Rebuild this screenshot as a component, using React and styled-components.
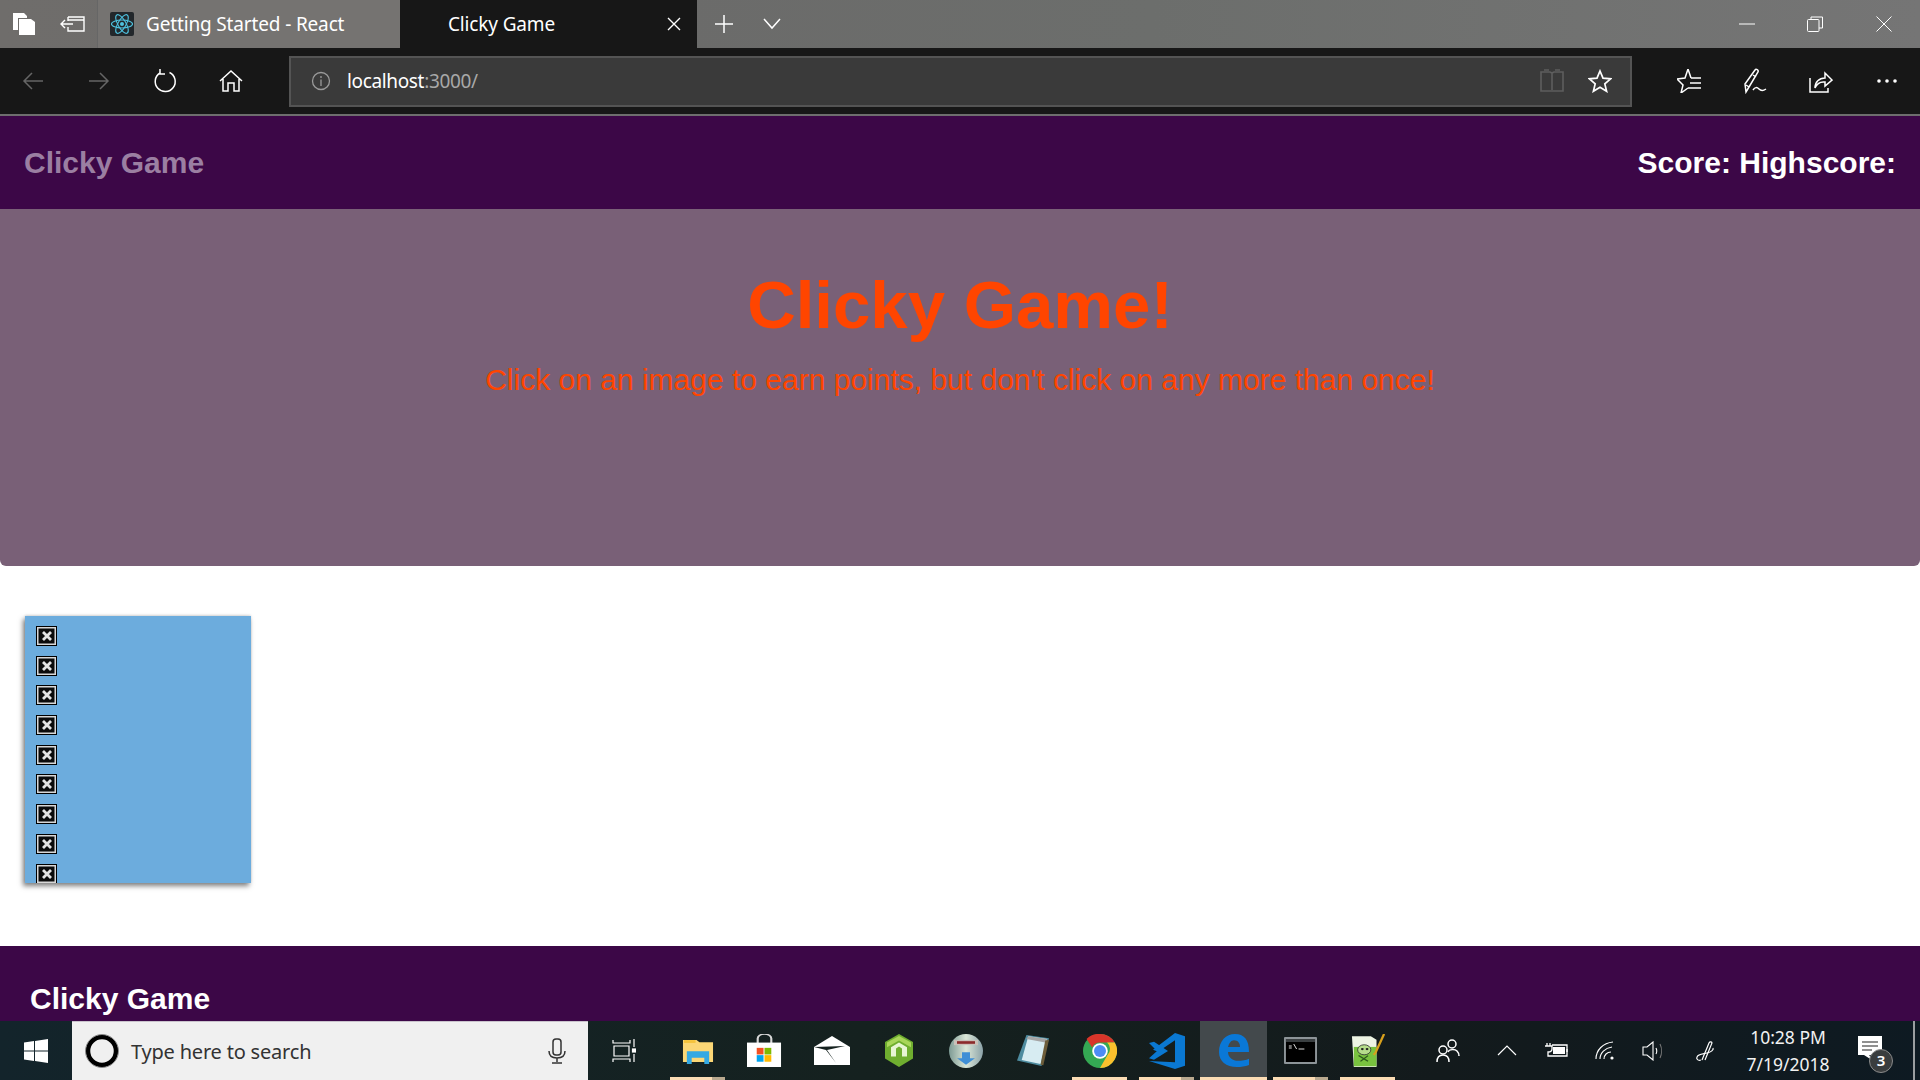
import React from "react";
import styled, { createGlobalStyle } from "styled-components";

const Global = createGlobalStyle`
  html, body { margin: 0; padding: 0; height: 100%; overflow: hidden; background: #fff; }
  #root { height: 1080px; }
  * { box-sizing: border-box; }
`;

const Screen = styled.div`
  display: flex; flex-direction: column; width: 1920px; height: 1080px; overflow: hidden;
  font-family: "Liberation Sans", Arial, sans-serif;
`;

/* ---------- browser chrome ---------- */
const TabBar = styled.div`
  display: flex; height: 48px; flex: none; color: #fff;
  background: linear-gradient(90deg, #6f6d6b 0%, #6b6b6a 35%, #6c6e6c 60%, #757575 100%);
  font-family: "Noto Sans", sans-serif; font-size: 19px;
`;
const TabTools = styled.div`
  display: flex; width: 97px; align-items: center; justify-content: space-between; padding: 0 12px 0 13px;
`;
const Tab = styled.div`
  display: flex; align-items: center; height: 48px; width: ${p => p.$w}px;
  padding-left: ${p => p.$pad}px; gap: 12px; position: relative;
  background: ${p => (p.$active ? "#171717" : "#757371")};
  border-left: ${p => (p.$active ? "none" : "1px solid #666")};
  letter-spacing: -0.15px; flex: none; white-space: nowrap;
`;
const TabClose = styled.span`
  display: flex; margin-left: auto; margin-right: 15px;
`;
const TabAction = styled.div`
  display: flex; width: ${p => p.$w}px; align-items: center; justify-content: center; flex: none;
`;
const WindowControls = styled.div`
  display: flex; margin-left: auto; height: 48px; padding-right: 2px;
`;
const WindowButton = styled.div`
  display: flex; width: 68.5px; align-items: center; justify-content: center;
`;
const NavBar = styled.div`
  display: flex; align-items: center; height: 66px; flex: none; background: #171717;
`;
const NavButton = styled.div`
  display: flex; width: 66px; height: 66px; align-items: center; justify-content: center; flex: none;
`;
const AddressBar = styled.div`
  display: flex; align-items: center; width: 1343px; height: 51px; margin-left: 25px; margin-right: 24px;
  background: #3a3a3a; border: 2px solid #545454; flex: none; padding-left: 20px;
  font-family: "Noto Sans", sans-serif; font-size: 19px; color: #fff; letter-spacing: -0.35px;
`;
const AddressText = styled.span`
  margin-left: 16px;
  em { font-style: normal; color: #a8a8a8; }
`;
const AddressIcons = styled.div`
  display: flex; margin-left: auto; align-items: center; gap: 23px; padding-right: 18px;
`;
const ChromeLine = styled.div` height: 2px; flex: none; background: #6e6e6e; `;

/* ---------- page ---------- */
const Viewport = styled.div` flex: 1; min-height: 0; overflow: hidden; display: flex; flex-direction: column; `;
const TopNav = styled.nav`
  display: flex; align-items: center; justify-content: space-between; height: 93px; flex: none;
  background: #3c0747; padding: 0 24px; font-weight: 700; font-size: 30px;
`;
const Brand = styled.span` color: #9b7fa2; `;
const Score = styled.span` color: #fff; `;
const Hero = styled.header`
  height: 357px; flex: none; background: #796077; border-radius: 0 0 6px 6px; color: #ff4500;
  text-align: center; padding-top: 58px;
`;
const HeroTitle = styled.h1` margin: 0; font-size: 67.2px; line-height: 76px; font-weight: 700; `;
const HeroText = styled.p` margin: 18px 0 0; font-size: 30px; line-height: 38px; `;
const Board = styled.main` flex: none; height: 380px; padding: 50px 25px 0; `;
const Card = styled.div`
  display: flex; flex-direction: column; gap: 9.7px; width: 226px; height: 267px; overflow: hidden;
  padding: 10px 11px; background: #6cacdd;
  box-shadow: -2px 3px 5px rgba(0, 0, 0, 0.5), 0 -1px 2px rgba(0, 0, 0, 0.12);
`;
const BrokenImage = styled.div`
  display: flex; align-items: center; justify-content: center; width: 21px; height: 20px; flex: none;
  background: #0c0c0c; border: 1px solid #000; box-shadow: inset 0 0 0 1.5px #d8d8d8;
`;
const Footer = styled.footer`
  height: 75px; flex: none; background: #3c0747; color: #fff; padding: 36px 30px 0;
  font-size: 30px; line-height: 34px; font-weight: 700;
`;

/* ---------- taskbar ---------- */
const Taskbar = styled.div`
  display: flex; height: 59px; flex: none; align-items: stretch; color: #fff;
  background: linear-gradient(90deg, #13242b 0%, #15211f 45%, #131a1c 75%, #0e1a22 100%);
  font-family: "Noto Sans", sans-serif;
`;
const StartButton = styled.div` display: flex; width: 72px; align-items: center; justify-content: center; `;
const SearchBox = styled.div`
  display: flex; align-items: center; width: 516px; padding: 0 22px 0 13px; background: #f0f0f0;
  border-top: 1px solid #c9c3cc; color: #333; font-size: 20px; letter-spacing: -0.2px;
`;
const SearchText = styled.span` margin-left: 12px; `;
const SearchMic = styled.span` display: flex; margin-left: auto; `;
const TaskView = styled.div` display: flex; width: 76px; padding-right: 4px; align-items: center; justify-content: center; `;
const AppSlot = styled.div`
  display: flex; position: relative; width: 67px; align-items: center; justify-content: center;
  background: ${p => (p.$focus ? "#43494c" : "transparent")};
`;
const RunningMark = styled.span`
  position: absolute; left: ${p => (p.$focus ? 0 : 6)}px; right: ${p => (p.$focus ? 0 : 6)}px; bottom: 0; height: 3px;
  background: ${p => (p.$split
    ? "linear-gradient(90deg, #fbdcb4 0 77%, #b9a98f 77% 100%)"
    : "#fbdcb4")};
`;
const Tray = styled.div` display: flex; margin-left: auto; `;
const TraySlot = styled.div` display: flex; width: ${p => p.$w}px; align-items: center; justify-content: center; `;
const Clock = styled.div`
  display: flex; flex-direction: column; width: 110px; align-items: center; justify-content: center; gap: 5px;
  font-size: 17.5px; line-height: 22px; color: #f2f2f2;
`;
const Notify = styled.div`
  display: flex; position: relative; width: 70px; align-items: center; justify-content: center;
`;
const Badge = styled.span`
  position: absolute; left: 26px; top: 28px; width: 24px; height: 24px; border-radius: 50%;
  background: #3a3d3e; border: 1px solid #8a8a8a; color: #fff; font-size: 15px; line-height: 21px; font-weight: 600; text-align: center;
`;
const ShowDesktop = styled.div` width: 7px; border-left: 2px solid #9a9ea0; `;

/* ---------- drawings ---------- */
const Ico = ({ w = 24, h = 24, vb, sw = 1.5, stroke = "#fff", fill = "none", children }) => (
  <svg width={w} height={h} viewBox={vb || `0 0 ${w} ${h}`} fill={fill} stroke={stroke} strokeWidth={sw}>{children}</svg>
);

const ReactLogo = () => (
  <svg width="24" height="24" viewBox="0 0 24 24">
    <rect width="24" height="24" rx="2" fill="#22272b" />
    <g fill="none" stroke="#4fc3e0" strokeWidth="1.100">
      <ellipse cx="12" cy="12" rx="10.500" ry="4" />
      <ellipse cx="12" cy="12" rx="10.500" ry="4" transform="rotate(60 12 12)" />
      <ellipse cx="12" cy="12" rx="10.500" ry="4" transform="rotate(120 12 12)" />
    </g>
    <circle cx="12" cy="12" r="2" fill="#4fc3e0" />
  </svg>
);

const Star = ({ size = 24, color = "#fff" }) => (
  <Ico w={size} h={size} vb="0 0 24 24" stroke={color} sw="1.700">
    <path d="M12 2l3 7.200 7.600.6-5.800 5 1.800 7.500L12 18.300l-6.600 4 1.800-7.500-5.800-5 7.600-.6z" />
  </Ico>
);

const Slash = () => (
  <svg width="12" height="12" viewBox="0 0 12 12" fill="none" stroke="#e4e4e4" strokeWidth="2.800">
    <path d="M2 2l8 8M10 2l-8 8" />
  </svg>
);

const Explorer = () => (
  <svg width="32" height="26" viewBox="0 0 33 37" preserveAspectRatio="none">
    <path d="M1 3h14l3 3h14v28H1z" fill="#fbd776" />
    <rect x="2" y="3" width="12" height="4" fill="#f5c33b" />
    <path d="M5 37V19h23v18h-5v-9H10v9z" fill="#34a9e3" />
  </svg>
);
const Store = () => (
  <svg width="35" height="33" viewBox="0 0 36 50" preserveAspectRatio="none">
    <path d="M11 14V7a7 7 0 0 1 14 0v7" fill="none" stroke="#d8d8d8" strokeWidth="2.200" />
    <rect y="13" width="35" height="37" fill="#fff" />
    <rect x="10" y="21" width="7" height="10" fill="#f25022" />
    <rect x="18" y="21" width="7" height="10" fill="#7fba00" />
    <rect x="10" y="32" width="7" height="10" fill="#00a4ef" />
    <rect x="18" y="32" width="7" height="10" fill="#ffb900" />
  </svg>
);
const Mail = () => (
  <svg width="36" height="29" viewBox="0 0 36 29">
    <path d="M0 11L18 0l18 11v18H0z" fill="#fff" />
    <path d="M0 11l31-1-18 4 9 13-10-13z" fill="#15211f" />
  </svg>
);
const GreenApp = () => (
  <svg width="28" height="33" viewBox="0 0 28 50" preserveAspectRatio="none">
    <path d="M14 0l14 12v25L14 50 0 37V12z" fill="#6fae2f" />
    <path d="M14 3l12 10v7L14 10 2 20v-7z" fill="#a9d65a" />
    <path d="M6 34V20l8-7 8 7v14h-5V22l-3-3-3 3v12z" fill="#e8f5d4" />
  </svg>
);
const Installer = () => (
  <svg width="34" height="34" viewBox="0 0 34 52" preserveAspectRatio="none">
    <defs>
      <linearGradient id="nsisG" x1="0" x2="1">
        <stop offset="0" stopColor="#7d9a94" /><stop offset="0.5" stopColor="#dbe7d8" /><stop offset="1" stopColor="#8ba2a8" />
      </linearGradient>
    </defs>
    <ellipse cx="17" cy="26" rx="17" ry="26" fill="url(#nsisG)" />
    <rect x="5" y="9" width="24" height="8" fill="#c9c0b8" />
    <rect x="8" y="11" width="18" height="4" fill="#8c2b2b" />
    <path d="M13 28h8v9h5l-9 10-9-10h5z" fill="#3f8fd6" />
  </svg>
);
const Notepad = () => (
  <svg width="32" height="31" viewBox="0 0 34 46" preserveAspectRatio="none">
    <path d="M10 0l24 5-8 41-26-8z" fill="#4e8ca0" />
    <path d="M12 2l20 4-7 37-20-6z" fill="#d7ecf2" />
    <path d="M12 2l20 4-2 5-20-5z" fill="#a5a5a5" />
    <path d="M30 8l4-1-6 38-3-1z" fill="#6d5d3a" />
  </svg>
);
const ChromeLogo = () => (
  <svg width="34" height="34" viewBox="0 0 48 48">
    <circle cx="24" cy="24" r="24" fill="#34a853" />
    <path d="M24 0a24 24 0 0 1 20.800 12H24a12 12 0 0 0-11 7L5 7A24 24 0 0 1 24 0z" fill="#d9352a" />
    <path d="M44.800 12A24 24 0 0 1 24 48l11-19a12 12 0 0 0-1-17z" fill="#fbc02d" />
    <circle cx="24" cy="24" r="11" fill="#fff" />
    <circle cx="24" cy="24" r="8.500" fill="#4e8cf5" />
  </svg>
);
const VSCode = () => (
  <svg width="36" height="36" viewBox="0 0 36 54" preserveAspectRatio="none">
    <path d="M26 0l10 5v44l-10 5L0 42l26 2V11L9 28l-5-3z" fill="#0a78d2" />
    <path d="M0 15l5-2 14 14-14 13-5-2 8-11z" fill="#0a78d2" />
  </svg>
);
const EdgeLogo = () => (
  <svg width="30" height="33" viewBox="0 0 30 48" preserveAspectRatio="none">
    <path d="M0 26C0 10 7 0 16 0c9 0 14 8 14 26H9c0 8 5 13 10 13 4 0 8-1 11-3v9c-4 2-8 3-12 3C7 48 0 39 0 26zM9 19h12c0-6-2-10-6-10-3 0-5 4-6 10z" fill="#0a78d7" />
  </svg>
);
const Terminal = () => (
  <svg width="33" height="27" viewBox="0 0 34 27" preserveAspectRatio="none">
    <rect width="34" height="27" rx="1" fill="#8d9498" />
    <rect x="2" y="2" width="30" height="23" fill="#000" />
    <rect x="2" y="2" width="30" height="3" fill="#3a3f41" />
    <path d="M5 9h3M5 11h3M10 7l3 5M15 12h6" stroke="#e0e0e0" strokeWidth="1" />
  </svg>
);
const NotepadPP = () => (
  <svg width="34" height="33" viewBox="0 0 36 46" preserveAspectRatio="none">
    <path d="M1 3h20l6 5v38H3z" fill="#eef4e4" />
    <rect x="3" y="18" width="24" height="27" fill="#79c23f" />
    <circle cx="14" cy="22" r="7" fill="#b6dd8c" stroke="#333" strokeWidth="1" />
    <circle cx="12" cy="21" r="1.500" fill="#222" /><circle cx="17" cy="21" r="1.500" fill="#222" />
    <path d="M8 30l10 8M18 30l-8 8" stroke="#2d5a1c" strokeWidth="1.500" />
    <path d="M35 0L26 26l-2 3 1-1" fill="none" stroke="#d8a01c" strokeWidth="2.500" />
  </svg>
);

const apps = [
  { key: "explorer", node: <Explorer />, run: true, split: true },
  { key: "store", node: <Store /> },
  { key: "mail", node: <Mail /> },
  { key: "green", node: <GreenApp /> },
  { key: "nsis", node: <Installer /> },
  { key: "notepad", node: <Notepad /> },
  { key: "chrome", node: <ChromeLogo />, run: true },
  { key: "vscode", node: <VSCode />, run: true, split: true },
  { key: "edge", node: <EdgeLogo />, run: true, focus: true },
  { key: "cmd", node: <Terminal />, run: true, split: true },
  { key: "npp", node: <NotepadPP />, run: true },
];

export default function App() {
  return (
    <Screen>
      <Global />
      <TabBar>
        <TabTools>
          <Ico w={22} h={22} sw="0" fill="#fff">
            <path d="M0 0h11l3 3v2H5v12H0z" /><path d="M6 6h12l4 3v13H6z" />
          </Ico>
          <Ico w={25} h={16} sw="1.400">
            <path d="M8 1h16v14H8v-4M8 5V1M8 4h16M1 8h12M5 4L1 8l4 4" />
          </Ico>
        </TabTools>
        <Tab $w={303} $pad={12}>
          <ReactLogo />
          <span>Getting Started - React</span>
        </Tab>
        <Tab $active $w={297} $pad={48}>
          <span>Clicky Game</span>
          <TabClose>
            <Ico w={16} h={16} sw="1.400"><path d="M2 2l12 12M14 2L2 14" /></Ico>
          </TabClose>
        </Tab>
        <TabAction $w={53}>
          <Ico w={22} h={22} sw="1.500"><path d="M11 2v18M2 11h18" /></Ico>
        </TabAction>
        <TabAction $w={44}>
          <Ico w={22} h={14} sw="1.500"><path d="M3 2l8 9 8-9" /></Ico>
        </TabAction>
        <WindowControls>
          <WindowButton><Ico w={16} h={16} sw="1"><path d="M0 8h16" /></Ico></WindowButton>
          <WindowButton>
            <Ico w={16} h={16} sw="1"><rect x=".5" y="3.500" width="11.500" height="12" rx="1" /><path d="M4 3V1h11.500v11H12" /></Ico>
          </WindowButton>
          <WindowButton><Ico w={16} h={16} sw="1"><path d="M.5.500l15 15M15.500.500l-15 15" /></Ico></WindowButton>
        </WindowControls>
      </TabBar>

      <NavBar>
        <NavButton>
          <Ico w={24} h={24} stroke="#666" sw="1.500"><path d="M22 12H3M11 4l-8 8 8 8" /></Ico>
        </NavButton>
        <NavButton>
          <Ico w={24} h={24} stroke="#666" sw="1.500"><path d="M2 12h19M13 4l8 8-8 8" /></Ico>
        </NavButton>
        <NavButton>
          <Ico w={24} h={24} sw="1.500"><path d="M7 4a10 10 0 1 0 9.500-.5" /><path d="M7 0v5h5" /></Ico>
        </NavButton>
        <NavButton>
          <Ico w={24} h={24} sw="1.500"><path d="M1 12L12 2l11 10M4 10v12h5v-8h6v8h5V10" /></Ico>
        </NavButton>
        <AddressBar>
          <Ico w={20} h={20} stroke="#9a9a9a" sw="1.300">
            <circle cx="10" cy="10" r="8.500" /><path d="M10 8.500V15M10 5v2" />
          </Ico>
          <AddressText>localhost<em>:3000/</em></AddressText>
          <AddressIcons>
            <Ico w={26} h={24} stroke="#5e5e5e" sw="1.600">
              <path d="M2 3h9l2 1 2-1h9v19H2zM13 4v17M5 1h5M16 1h5" />
            </Ico>
            <Star size={24} />
          </AddressIcons>
        </AddressBar>
        <NavButton>
          <Ico w={24} h={24} sw="1.500">
            <path d="M11 0l3 9M11 0L8 9l-8 1 6 6-2 8 7-5M14 9h10M13 14h11M11 19h13" />
          </Ico>
        </NavButton>
        <NavButton>
          <Ico w={24} h={26} sw="1.500">
            <path d="M3 24L2 16 12 2c1-1.500 4 0 3 2L6 19zM6 19l-3-2M10 7l3 2" /><path d="M10 22c2-3 4-3 6-1s4 2 7 0" />
          </Ico>
        </NavButton>
        <NavButton>
          <Ico w={24} h={24} sw="1.500">
            <path d="M1 9v14h18v-4" /><path d="M6 19c0-6 4-10 10-10V4l7 7-7 6v-4c-4-.5-8 1-10 6z" />
          </Ico>
        </NavButton>
        <NavButton>
          <Ico w={24} h={6} sw="0" fill="#fff">
            <circle cx="4" cy="3" r="1.800" /><circle cx="12" cy="3" r="1.800" /><circle cx="20" cy="3" r="1.800" />
          </Ico>
        </NavButton>
      </NavBar>
      <ChromeLine />

      <Viewport>
        <TopNav>
          <Brand>Clicky Game</Brand>
          <Score>Score: Highscore:</Score>
        </TopNav>
        <Hero>
          <HeroTitle>Clicky Game!</HeroTitle>
          <HeroText>Click on an image to earn points, but don't click on any more than once!</HeroText>
        </Hero>
        <Board>
          <Card>
            {Array.from({ length: 9 }, (_, i) => (
              <BrokenImage key={i}><Slash /></BrokenImage>
            ))}
          </Card>
        </Board>
        <Footer>Clicky Game</Footer>
      </Viewport>

      <Taskbar>
        <StartButton>
          <svg width="24" height="24" viewBox="0 0 24 24" fill="#fff">
            <path d="M0 3.500l10-1.400V11.500H0zM11 2l13-2v11.500H11zM0 12.500h10v9.400L0 20.500zM11 12.500h13V24l-13-2z" />
          </svg>
        </StartButton>
        <SearchBox>
          <svg width="34" height="34" viewBox="0 0 34 34" fill="none">
            <circle cx="17" cy="17" r="14" stroke="#000" strokeWidth="4.500" />
            <circle cx="17" cy="17" r="16.500" stroke="#888" strokeWidth="1" />
          </svg>
          <SearchText>Type here to search</SearchText>
          <SearchMic>
            <Ico w={18} h={26} stroke="#333" sw="1.500">
              <rect x="5" y="1" width="8" height="16" rx="3" /><path d="M1 13c0 5 3 7 8 7s8-2 8-7M9 20v4M4 25h10" />
            </Ico>
          </SearchMic>
        </SearchBox>
        <TaskView>
          <Ico w={24} h={24} sw="1.200">
            <path d="M1 1v3h17V1M2 7h15v10H2zM1 23v-3h17v3M22 0v8M22 15v8" /><rect x="20.500" y="10" width="3" height="3" fill="#fff" />
          </Ico>
        </TaskView>
        {apps.map(a => (
          <AppSlot key={a.key} $focus={a.focus}>
            {a.node}
            {a.run && <RunningMark $focus={a.focus} $split={a.split} />}
          </AppSlot>
        ))}
        <Tray>
          <TraySlot $w={66}>
            <Ico w={24} h={24} sw="1.500">
              <circle cx="16" cy="5" r="4" /><path d="M12 13c1-3 7-3 9-1 1 1 2 3 2 5" />
              <circle cx="7" cy="11" r="4" /><path d="M1 23c0-4 2-7 6-7s6 3 6 7" />
            </Ico>
          </TraySlot>
          <TraySlot $w={52}><Ico w={20} h={12} sw="1.200"><path d="M1 10l9-9 9 9" /></Ico></TraySlot>
          <TraySlot $w={46}>
            <Ico w={24} h={16} sw="1.300">
              <path d="M3 0v3M6 0v3M1 3h7v3c0 2-2 3-4 3v4h4M8 2h15v11H8" /><rect x="9" y="4" width="12" height="7" fill="#fff" stroke="none" /><path d="M23 6v3" />
            </Ico>
          </TraySlot>
          <TraySlot $w={52}>
            <Ico w={20} h={20} sw="1.100">
              <path d="M1 18C1 9 8 2 18 1M5 18c0-6 5-11 12-12M9 18c0-4 3-7 7-7" /><circle cx="17" cy="17" r="1.600" fill="#fff" stroke="none" />
            </Ico>
          </TraySlot>
          <TraySlot $w={45}>
            <Ico w={24} h={20} sw="1.100">
              <path d="M1 6h4l6-5v18l-6-5H1zM14 7c1 2 1 4 0 6" /><path d="M18 3c2 4 2 10 0 14" stroke="#777" />
            </Ico>
          </TraySlot>
          <TraySlot $w={57}>
            <Ico w={22} h={22} sw="1.200">
              <path d="M7 20c-3 1-5-1-4-3 1-3 6-3 10-4s7-3 6-5" /><path d="M8 20L15 3c1-2 3-1 3 0l-7 17" />
            </Ico>
          </TraySlot>
          <Clock>
            <span>10:28 PM</span>
            <span>7/19/2018</span>
          </Clock>
          <Notify>
            <svg width="24" height="26" viewBox="0 0 24 26" style={{ marginLeft: -16, marginTop: -4 }}>
              <path d="M0 0h24v19H11l6 7-11-7H0z" fill="#fff" />
              <path d="M4 6h16M4 10h16M4 14h10" stroke="#222" strokeWidth="1.200" />
            </svg>
            <Badge>3</Badge>
          </Notify>
          <ShowDesktop />
        </Tray>
      </Taskbar>
    </Screen>
  );
}
